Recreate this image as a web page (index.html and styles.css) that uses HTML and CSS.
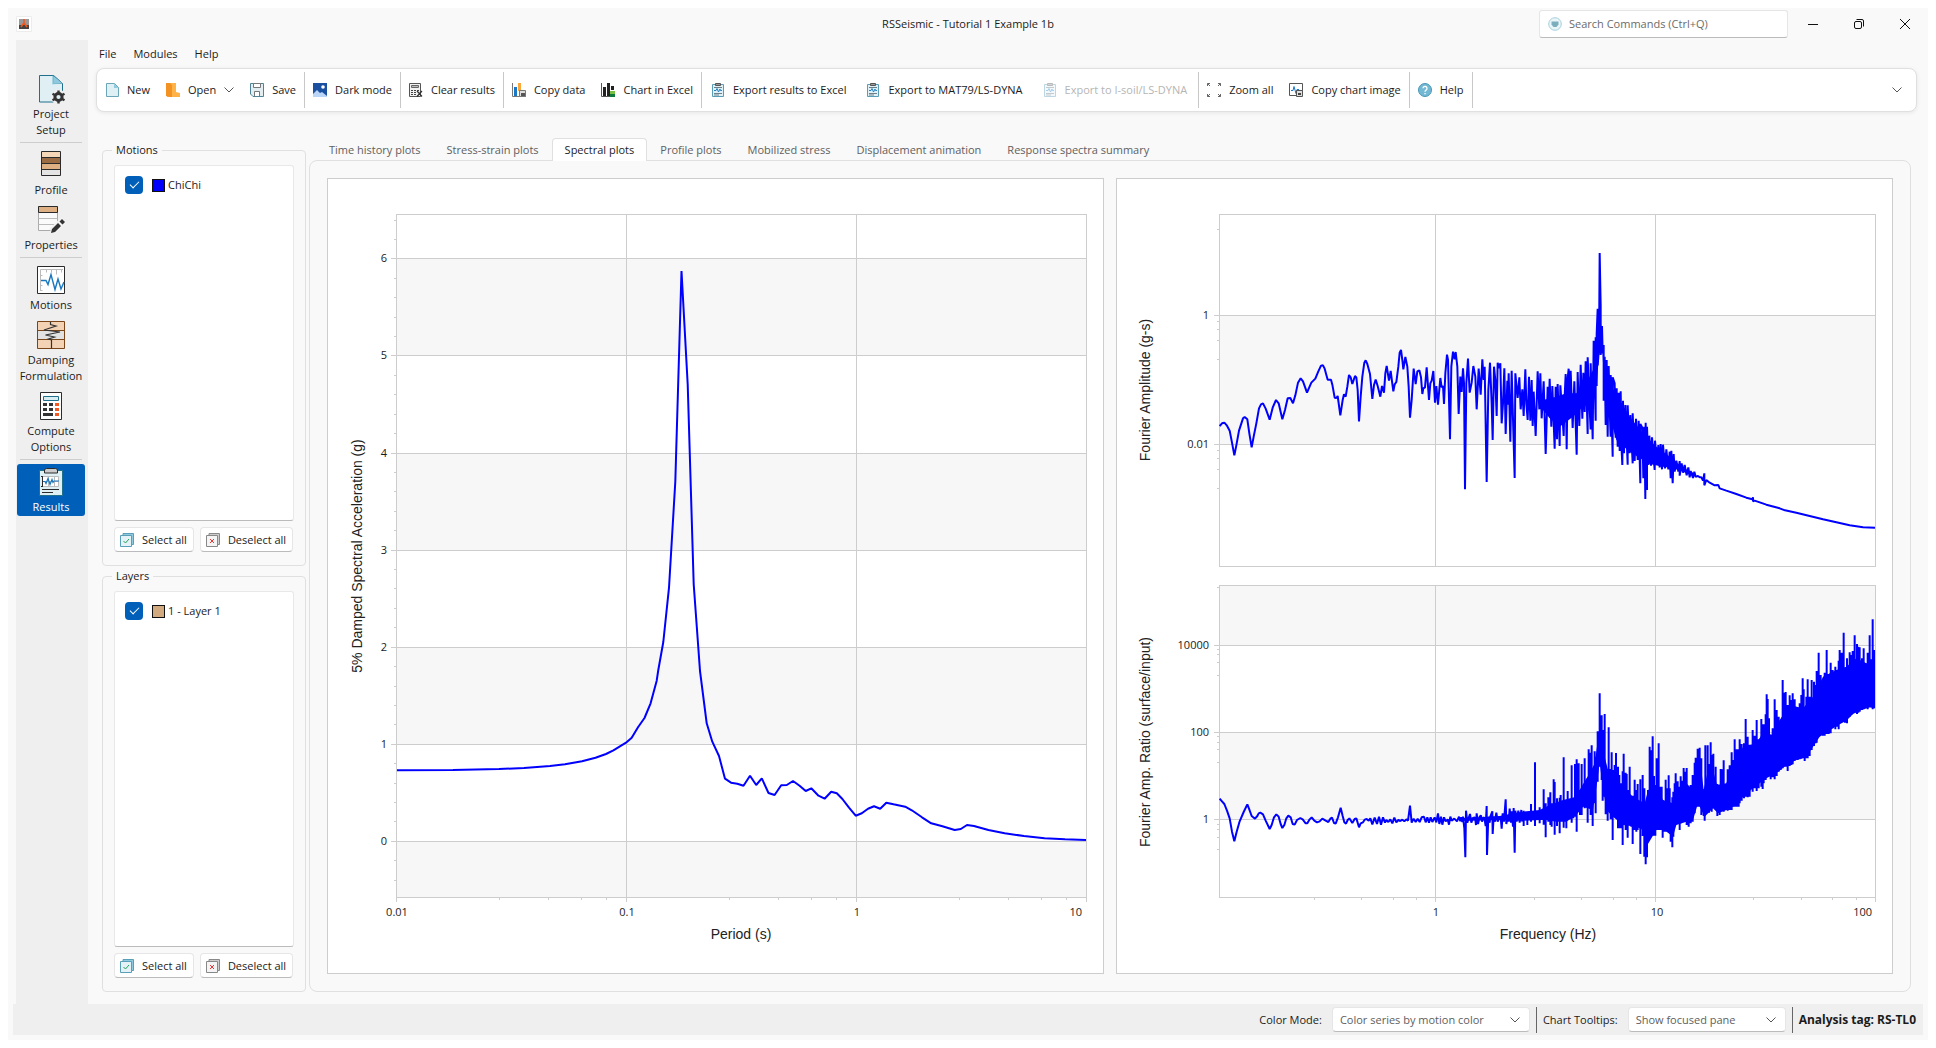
FILE: index.html
```html
<!DOCTYPE html>
<html lang="en">
<head>
<meta charset="utf-8">
<title>RSSeismic - Tutorial 1 Example 1b</title>
<link rel="stylesheet" href="styles.css">
</head>
<body>
<svg class="defs" aria-hidden="true">
  <symbol id="chevron" viewBox="0 0 10 6"><path d="M.5 .5L5 5L9.500 .5" fill="none" stroke="currentColor"/></symbol>
  <symbol id="report" viewBox="0 0 14 14">
    <path d="M1.500 1.500h11v12h-11z" fill="#dff0f6" stroke="#5a9cb5"/>
    <path d="M4.500 .5h5v2h-5z" fill="#999" stroke="#555"/>
    <path d="M3 4.500h8M3 10.500h8M3 12h5" stroke="#6d7f88"/>
    <path d="M3 7.500h2l1-2 1.500 3.500 1.500-3 .5 1.500h1.500" fill="none" stroke="#2381c4"/>
  </symbol>
  <symbol id="checkall" viewBox="0 0 14 14">
    <path d="M3 .5h10.500v11H3z" fill="#8fc9de" stroke="#5a9fb8"/>
    <path d="M.5 2.500h11v11H.5z" fill="#e4f2f7" stroke="#5a9fb8"/>
    <path d="M3.500 8l2 2 3.500-4" fill="none" stroke="#1fa55b"/>
  </symbol>
  <symbol id="uncheckall" viewBox="0 0 14 14">
    <path d="M3 .5h10.500v11H3z" fill="#ccc" stroke="#888"/>
    <path d="M.5 2.500h11v11H.5z" fill="#f4f4f4" stroke="#888"/>
    <path d="M4 6l4 4M8 6l-4 4" fill="none" stroke="#e33"/>
  </symbol>
</svg>

<div class="window">
  <header class="titlebar">
    <svg class="app-icon" viewBox="0 0 16 16"><path d="M.5 .5h15v15H.5z" fill="#fff" stroke="#ececec"/><path d="M3 3h10v10H3z" fill="#999"/><path d="M3 9h10v4H3z" fill="#444"/><path d="M8 3v6M5 11l2-3h2l2 3" fill="none" stroke="#f1581e" stroke-width="1.500"/></svg>
    <h1>RSSeismic - Tutorial 1 Example 1b</h1>
    <div class="title-tools">
      <label class="search">
        <svg viewBox="0 0 14 14"><circle cx="7" cy="7" r="6.300" fill="#e9f5f9" stroke="#a7cfdc"/><path d="M3.500 4.500h7v3l-2 2.500h-3l-2-2.500z" fill="#7cadbd"/></svg>
        <input type="text" placeholder="Search Commands (Ctrl+Q)" aria-label="Search Commands">
      </label>
      <button class="win-btn" aria-label="Minimize"><svg viewBox="0 0 10 10"><path d="M0 5.500h10" stroke="#111"/></svg></button>
      <button class="win-btn" aria-label="Restore"><svg viewBox="0 0 10 10"><rect x=".5" y="2.500" width="7" height="7" rx="1.500" fill="none" stroke="#111"/><path d="M2.500 .5H8a1.500 1.500 0 0 1 1.500 1.500v5.500" fill="none" stroke="#111"/></svg></button>
      <button class="win-btn" aria-label="Close"><svg viewBox="0 0 10 10"><path d="M0 0l10 10M10 0L0 10" stroke="#111"/></svg></button>
    </div>
  </header>

  <div class="body">
    <nav class="sidebar">
      <button class="step"><svg viewBox="0 0 28 28"><path d="M2.500 .5h14l9 8v18.500h-23z" fill="#dfeff4" stroke="#20708c"/><path d="M16.500 .5v8h9z" fill="#8fc9de" stroke="#20708c" stroke-width=".6"/><path d="M15 .5v9l11-1z" fill="#8fc9de" opacity=".7"/><circle cx="21.500" cy="22" r="7.500" fill="#efefef"/><circle cx="21.500" cy="22" r="3.600" fill="#dfeff4" stroke="#333" stroke-width="3"/><path d="M21.500 15.500v3M21.500 25.500v3M15.500 18.800l2.700 1.500M24.800 23.800l2.700 1.500M15.500 25.300l2.700-1.500M24.800 20.300l2.700-1.500" stroke="#333" stroke-width="2.400"/></svg>Project<br>Setup</button>
      <hr>
      <button class="step"><svg viewBox="0 0 28 28"><path d="M4.500 .5h19v6h-19z" fill="#f6d7b8"/><path d="M4.500 6.500h19v6h-19z" fill="#9b6b43"/><path d="M4.500 12.500h19v6h-19z" fill="#deb083"/><path d="M4.500 18.500h19v6h-19z" fill="#e4e4e4"/><path d="M4.500 .5h19v24h-19zM4.500 6.500h19M4.500 12.500h19M4.500 18.500h19" fill="none" stroke="#2b2b2b"/></svg>Profile</button>
      <button class="step"><svg viewBox="0 0 28 28"><path d="M1.500 .5h19v24h-19z" fill="#fafafa" stroke="#aaa"/><path d="M1.500 12.500h19M1.500 18.500h19" stroke="#bbb"/><path d="M1.500 .5h19v6h-19z" fill="#deb083" stroke="#2b2b2b"/><path d="M15 26l9-9 3-3" stroke="#f2f2f2" stroke-width="8"/><path d="M14 27l1-4 6-6 3 3-6 6zM22.500 15.500l2.500-2.500 3 3-2.500 2.500z" fill="#333"/></svg>Properties</button>
      <hr>
      <button class="step"><svg viewBox="0 0 28 28"><path d="M.5 .5h27v27H.5z" fill="#fff" stroke="#2b2b2b"/><path d="M3.500 25V3.500H26M3.500 9.500h2M3.500 19.500h2M3.500 24.500h2M9.500 3.500v3M14.500 3.500v3M19.500 3.500v5M24.500 3.500v3" fill="none" stroke="#bbb"/><path d="M4 14.500h5l2 4 3-10 4 15 3-10.500 3 10 3-7" fill="none" stroke="#1877be" stroke-width="1.400"/></svg>Motions</button>
      <button class="step"><svg viewBox="0 0 28 28"><path d="M.5 .5h27v27H.5z" fill="#f3d3b3"/><path d="M1 9.500h26v9H1z" fill="#e2e2e2"/><path d="M.5 .5h27v27H.5zM.5 9.500h27M.5 18.500h27" fill="none" stroke="#7a4518"/><path d="M13.500 1v2.500l5.500 1.500-12 4 16 2-14.500 3 9 2-6 2 3 1M14.500 18.500v9" fill="none" stroke="#333" stroke-width="1.200"/></svg>Damping<br>Formulation</button>
      <button class="step"><svg viewBox="0 0 28 28"><path d="M3.500 .5h21v27h-21z" fill="#fff" stroke="#2b2b2b"/><path d="M6.500 4.500h15v4h-15z" fill="#d9eef3" stroke="#20708c"/><path d="M6 11h4v3H6zM12 11h4v3h-4zM6 16h4v3H6zM12 16h4v3h-4zM6 21h10v3H6z" fill="#333"/><path d="M18 11h4v3h-4zM18 16h4v3h-4zM18 21h4v3h-4z" fill="#f15a24"/></svg>Compute<br>Options</button>
      <hr>
      <button class="step current"><svg viewBox="0 0 28 28"><path d="M2.500 2.500h23v25h-23z" fill="#dff0f5" stroke="#20708c"/><path d="M7.500 1.500l2-1h9l2 1v3.500h-13z" fill="#ccc" stroke="#2b2b2b"/><path d="M5.500 8.500h16v10h-16zM5.500 13.500h16M11.500 8.500v10M17.500 8.500v10" fill="#fff" stroke="#bbb"/><path d="M5.500 8v11M4 8.500h2M4 18.500h2M5 21.500h17M5 24.500h11" stroke="#2b2b2b"/><path d="M6 13.500h2l1 2 2-5 2 6 2-5 1 3 1-1.500h5" fill="none" stroke="#1877be" stroke-width="1.200"/></svg>Results</button>
    </nav>

    <main>
      <div class="menubar">
        <button>File</button><button>Modules</button><button>Help</button>
      </div>

      <div class="toolbar">
        <button class="tool"><svg viewBox="0 0 14 14"><path d="M1.500 .5h8l4 4v9h-12z" fill="#dff0f5" stroke="#6aa6b8"/><path d="M9 .5v4.500h4.500z" fill="#8fc9de"/></svg>New</button>
        <button class="tool"><svg viewBox="0 0 14 14"><path d="M0 0h10v9l4 1v4H1z" fill="#ffb347"/><path d="M0 0h4l2 2v12H4l-4-1z" fill="#f29222"/></svg>Open<svg class="caret"><use href="#chevron"/></svg></button>
        <button class="tool"><svg viewBox="0 0 14 14"><path d="M.5 .5h13v13H3l-2.500-2.500z" fill="#e3eef2" stroke="#4f8496"/><path d="M3.500 .5h7v4h-7zM4.500 13v-4.500h5V13" fill="#fff" stroke="#777"/></svg>Save</button>
        <hr>
        <button class="tool"><svg viewBox="0 0 14 14"><path d="M0 0h14v14H0z" fill="#1b4f9f"/><path d="M0 14v-3l4-4 3 3 2-1 5 4v1z" fill="#b9d5f8"/><circle cx="10" cy="4" r="1.800" fill="#fff"/></svg>Dark mode</button>
        <hr>
        <button class="tool"><svg viewBox="0 0 14 14"><path d="M.5 .5h11v13H.5z" fill="#f2f2f2" stroke="#555"/><path d="M2.500 2.500h7v2h-7z" fill="#bbb" stroke="#666"/><path d="M2 7.500h8M2 9.500h5M2 11.500h5" stroke="#444" stroke-dasharray="2 1"/><path d="M8 8l5 5.500M13 8l-5 5.500" stroke="#333" stroke-width="1.200"/></svg>Clear results</button>
        <hr>
        <button class="tool"><svg viewBox="0 0 14 14"><path d="M.5 0v13.500H14" fill="none" stroke="#777"/><path d="M2 4h3v9H2z" fill="#1a78c8"/><path d="M6 0h3v8H6z" fill="#f9a73b"/><path d="M7.500 7.500h6v6h-6z" fill="#ddd" stroke="#777"/><path d="M9 10h4v3H9z" fill="#555"/></svg>Copy data</button>
        <button class="tool"><svg viewBox="0 0 14 14"><path d="M.5 0v13.500H14" fill="none" stroke="#555"/><path d="M2 4h3v9H2zM6 0h3v13H6zM10 3h3v4h-3z" fill="#222"/><path d="M9 8h5v3H9z" fill="#7ac143"/><path d="M9 11h5v3H9z" fill="#0d7a3c"/></svg>Chart in Excel</button>
        <hr>
        <button class="tool export"><svg><use href="#report"/></svg>Export results to Excel</button>
        <button class="tool export"><svg><use href="#report"/></svg>Export to MAT79/LS-DYNA</button>
        <button class="tool export" disabled><svg><use href="#report"/></svg>Export to I-soil/LS-DYNA</button>
        <hr>
        <button class="tool"><svg viewBox="0 0 14 14"><path d="M.5 3V.5H3M.5 .5L3 3M11 .5h2.500V3M13.500 .5L11 3M.5 11v2.500H3M.5 13.500L3 11M11 13.500h2.500V11M13.500 13.500L11 11" fill="none" stroke="#666"/></svg>Zoom all</button>
        <button class="tool"><svg viewBox="0 0 14 14"><path d="M.5 .5h13v12H.5z" fill="#fff" stroke="#555"/><path d="M2 7.500h2l1-4 2 7 1-4h2" fill="none" stroke="#1a78c8"/><path d="M7.500 7.500h6v6h-6z" fill="#ddd" stroke="#555"/><path d="M9 10h3v2H9z" fill="#444"/></svg>Copy chart image</button>
        <hr>
        <button class="tool"><svg viewBox="0 0 14 14"><circle cx="7" cy="7" r="6.500" fill="#74b9d4" stroke="#4996b5"/><path d="M5 5.300a2 2 0 1 1 3 1.800q-1 .6-1 1.700M7 10v1.300" fill="none" stroke="#fff" stroke-width="1.300"/></svg>Help</button>
        <hr>
        <button class="more" aria-label="More commands"><svg class="caret"><use href="#chevron"/></svg></button>
      </div>

      <div class="content">
        <div class="filters">
          <fieldset>
            <legend>Motions</legend>
            <div class="list">
              <label><input type="checkbox" checked><span class="swatch motion"></span>ChiChi</label>
            </div>
            <div class="actions">
              <button><svg><use href="#checkall"/></svg>Select all</button>
              <button><svg><use href="#uncheckall"/></svg>Deselect all</button>
            </div>
          </fieldset>
          <fieldset>
            <legend>Layers</legend>
            <div class="list">
              <label><input type="checkbox" checked><span class="swatch layer"></span>1 - Layer 1</label>
            </div>
            <div class="actions">
              <button><svg><use href="#checkall"/></svg>Select all</button>
              <button><svg><use href="#uncheckall"/></svg>Deselect all</button>
            </div>
          </fieldset>
        </div>

        <section class="results">
          <div class="tabs" role="tablist">
            <button role="tab">Time history plots</button>
            <button role="tab">Stress-strain plots</button>
            <button role="tab" aria-selected="true">Spectral plots</button>
            <button role="tab">Profile plots</button>
            <button role="tab">Mobilized stress</button>
            <button role="tab">Displacement animation</button>
            <button role="tab">Response spectra summary</button>
          </div>
          <div class="charts">
            <svg class="chart" viewBox="328 179 775 794">
              <g class="band"><path d="M396 258h690v97h-690zM396 453h690v97h-690zM396 647h690v97h-690zM396 841h690v56h-690z"/></g>
              <g class="grid">
                <path d="M396.500 214.500h690v683h-690zM626.500 214v688M856.500 214v688M396.500 897v5M1086.500 897v5"/>
                <path d="M391 258.500h695M391 355.500h695M391 453.500h695M391 550.500h695M391 647.500h695M391 744.500h695M391 841.500h695"/>
                <path d="M394 220.500h2M394 239.500h2M394 278.500h2M394 297.500h2M394 317.500h2M394 336.500h2M394 375.500h2M394 394.500h2M394 414.500h2M394 433.500h2M394 472.500h2M394 491.500h2M394 511.500h2M394 530.500h2M394 569.500h2M394 588.500h2M394 608.500h2M394 627.500h2M394 666.500h2M394 686.500h2M394 705.500h2M394 724.500h2M394 763.500h2M394 783.500h2M394 802.500h2M394 821.500h2M394 860.500h2M394 880.500h2"/>
                <path d="M499.500 897v3M548.500 897v3M581.500 897v3M606.500 897v3M729.500 897v3M778.500 897v3M811.500 897v3M836.500 897v3M959.500 897v3M1008.500 897v3M1041.500 897v3M1066.500 897v3"/>
              </g>
              <g class="ticks end"><text x="387" y="262">6</text><text x="387" y="359">5</text><text x="387" y="457">4</text><text x="387" y="554">3</text><text x="387" y="651">2</text><text x="387" y="748">1</text><text x="387" y="845">0</text><text x="1082" y="916">10</text></g>
              <g class="ticks mid"><text x="397" y="916">0.01</text><text x="627" y="916">0.1</text><text x="857" y="916">1</text></g>
              <text class="axis" x="741" y="939">Period (s)</text>
              <text class="axis" transform="translate(362 556) rotate(-90)">5% Damped Spectral Acceleration (g)</text>
              <polyline class="line" points="397,770.300 453,770 499,769 524,768 550,766 565,764.300 582,761.300 595.500,757.700 606,754 613.400,750.300 626,742.700 631.700,737.700 638,727.300 644.500,718 650.600,703.300 656.700,680.700 658.300,670 663.300,642 669,587.700 675.300,481.700 681.500,271 687.700,384.300 693.700,584.300 700,671 706.700,723.300 712.300,741.700 719,756 725,778.700 731,782.700 737.300,783.700 743.500,785.700 750,775.700 756.200,785 761.800,778.300 768.500,793 774.600,795 781.200,785.300 786.800,785 793,781 799.600,785.700 805.700,791 811.300,788.300 818.500,795.700 824.600,798.700 831.200,791.700 836.800,793.300 842.400,799 849,807.700 855.700,815.700 861.800,813.300 868,808.700 874,806.300 880.200,808.700 886.300,802.700 893.500,804.300 905.200,806.700 911.800,810.300 922,817.300 931.200,823.300 942.400,826.300 954.700,830 960.800,829 967,825 974,826 988.400,830 1004.700,833.300 1024,836 1044.500,838.300 1065,839.300 1086,840"/>
            </svg>

            <svg class="chart" viewBox="1117 179 775 794">
              <g class="band"><path d="M1219 315h656v129h-656zM1219 585h656v60h-656zM1219 732h656v87h-656z"/></g>
              <g class="grid">
                <path d="M1219.500 214.500h656v352h-656zM1219.500 585.500h656v312h-656zM1435.500 214v352M1655.500 214v352M1435.500 585v317M1655.500 585v317M1875.500 897v5"/>
                <path d="M1214 315.500h661M1214 444.500h661M1214 645.500h661M1214 732.500h661M1214 819.500h661"/>
                <path d="M1217 229.500h2M1217 321.500h2M1217 329.500h2M1217 340.500h2M1217 359.500h2M1217 450.500h2M1217 458.500h2M1217 469.500h2M1217 488.500h2M1217 587.500h2M1217 649.500h2M1217 654.500h2M1217 662.500h2M1217 675.500h2M1217 736.500h2M1217 742.500h2M1217 749.500h2M1217 762.500h2M1217 824.500h2M1217 829.500h2M1217 837.500h2M1217 849.500h2"/>
                <path d="M1314.500 897v3M1361.500 897v3M1393.500 897v3M1416.500 897v3M1534.500 897v3M1581.500 897v3M1613.500 897v3M1636.500 897v3M1753.500 897v3M1801.500 897v3M1832.500 897v3M1856.500 897v3"/>
              </g>
              <g class="ticks end"><text x="1209" y="319">1</text><text x="1209" y="448">0.01</text><text x="1209" y="649">10000</text><text x="1209" y="736">100</text><text x="1209" y="823">1</text><text x="1872" y="916">100</text></g>
              <g class="ticks mid"><text x="1436" y="916">1</text><text x="1657" y="916">10</text></g>
              <text class="axis" x="1548" y="939">Frequency (Hz)</text>
              <text class="axis" transform="translate(1150 390) rotate(-90)">Fourier Amplitude (g-s)</text>
              <text class="axis" transform="translate(1150 742) rotate(-90)">Fourier Amp. Ratio (surface/input)</text>

              <svg x="1219" y="214" width="656" height="352" viewBox="328 132 1968 1056">
                <polygon class="mass" points="1300,690 1340,680 1370,670 1400,670 1430,640 1450,600 1462,520 1470,420 1478,500 1486,600 1500,640 1530,690 1560,740 1600,790 1640,830 1680,860 1720,893 1760,913 1750,918 1720,905 1690,895 1660,890 1620,882 1600,870 1560,845 1520,810 1500,740 1486,690 1478,540 1470,520 1462,640 1445,700 1420,710 1390,740 1350,770 1320,745 1300,720"/>
                <polyline class="line dense" points="330,768 337,760 344,758 352,767 360,782 367,818 374,856 380,826 388,782 400,745 405,741 413,748 419,790 426,832 432,800 440,760 448,715 454,703 460,700 468,716 480,749 489,713 499,690 507,700 518,748 526,720 534,685 542,684 550,700 557,676 565,638 573,625 580,634 592,668 605,638 617,626 626,604 634,587 640,586 645,596 654,629 664,629 668,644 675,683 680,684 684,678 692,736 699,690 703,673 708,680 713,650 718,615 723,622 728,642 736,618 740,622 744,660 748,754 753,680 758,620 764,578 768,571 773,582 781,612 788,687 793,645 798,629 804,648 812,680 817,648 823,668 827,610 831,588 838,632 843,603 851,664 855,643 860,636 866,590 870,548 874,540 878,570 881,598 887,561 893,590 897,650 901,743 906,690 912,596 918,642 923,604 929,601 934,622 938,672 941,655 946,652 951,592 958,690 962,640 966,632 971,603 976,698 980,648 985,704 992,624 996,652 1000,648 1003,702 1007,610 1012,554 1015,570 1021,808 1025,590 1030,545 1035,568 1038,546 1043,590 1047,732 1052,620 1056,666 1060,595 1063,640 1066,958 1070,640 1075,566 1080,668 1086,638 1091,588 1097,620 1101,718 1107,596 1113,674 1118,568 1122,630 1125,590 1131,936 1136,660 1141,578 1146,700 1149,810 1153,590 1157,630 1161,738 1164,578 1168,595 1172,580 1176,760 1180,700 1184,595 1188,792 1193,632 1195,704 1197,610 1202,815 1206,602 1211,782 1215,924 1217,610 1224,684 1229,622 1233,718 1238,658 1242,738 1247,598 1250,700 1254,750 1258,620 1262,752 1266,630 1269,768 1272,665 1278,798 1284,604 1289,718 1292,610 1296,745 1302,634 1308,852 1314,650 1317,735 1320,626 1325,770 1328,648 1335,836 1338,650 1342,808 1344,642 1350,828 1352,646 1358,735 1362,798 1365,680 1368,612 1371,838 1374,625 1377,596 1380,738 1383,602 1389,774 1394,634 1401,854 1404,606 1409,768 1413,584 1418,746 1421,608 1425,726 1428,574 1434,792 1434,562 1440,718 1443,778 1443,580 1449,808 1452,512 1458,752 1458,502 1461,648 1461,492 1464,416 1464,586 1468,534 1470,249 1473,405 1473,555 1477,468 1479,550 1482,525 1482,692 1485,560 1488,765 1491,570 1494,800 1497,588 1500,718 1503,800 1503,615 1509,860 1509,622 1515,640 1518,803 1521,655 1524,830 1527,668 1530,843 1533,664 1536,843 1538,885 1540,692 1543,850 1547,705 1554,884 1554,706 1560,850 1562,735 1569,880 1569,730 1575,873 1579,746 1584,870 1587,752 1592,940 1592,762 1598,773 1601,925 1604,770 1607,987 1608,758 1612,960 1612,770 1616,885 1619,797 1624,887 1627,802 1635,900 1636,812 1642,880 1646,825 1650,892 1653,822 1657,898 1660,824 1666,895 1670,838 1676,898 1680,845 1683,925 1685,842 1689,940 1692,852 1695,905 1700,872 1706,905 1710,873 1710,917 1716,880 1720,908 1725,885 1731,916 1736,892 1740,922 1743,903 1750,924 1754,905 1758,920 1765,918 1770,922 1775,922 1780,932 1784,910 1784,946 1790,930 1800,938 1815,946 1826,945 1830,955 1850,962 1880,972 1910,983 1928,988 1930,982 1930,994 1935,992 1970,1004 2010,1015 2026,1021 2060,1028 2100,1038 2140,1048 2180,1057 2220,1066 2260,1072 2296,1073"/>
              </svg>

              <svg x="1219" y="585" width="656" height="312" viewBox="328 45 1968 936">
                <polyline class="line dense" points="330,686 337,694 344,702 352,722 360,745 367,785 374,814 381,785 390,754 402,726 413,703 418,716 426,738 436,746 443,738 447,730 452,728 460,733 468,752 480,777 486,765 493,742 500,733 507,740 513,762 518,774 524,765 530,745 536,737 543,742 549,762 555,764 562,750 572,744 579,748 588,760 593,760 600,748 606,742 614,752 622,757 630,754 638,746 648,752 656,756 662,746 667,743 673,759 678,761 685,742 693,713 699,738 704,757 709,761 714,750 719,745 728,759 735,747 740,745 744,758 748,772 753,760 760,757 765,749 771,747 777,752 782,745 788,763 795,743 802,762 808,740 814,764 820,742 826,758 830,750 836,756 842,748 848,760 854,743 860,757 866,750 872,753 878,749 884,754 890,748 895,752 901,707 906,758 912,746 918,756 924,746 930,756 936,742 943,740 948,757 953,742 958,758 963,742 968,756 975,742 980,757 985,730 989,762 994,740 998,764 1003,742 1008,754 1014,748 1018,764 1022,740 1026,752 1034,746 1042,754 1048,740 1052,754 1055,742 1058,756 1060,740 1064,775 1067,862 1069,722 1073,758 1077,744 1081,732 1085,758 1090,744 1096,742 1099,765 1101,730 1105,762 1110,740 1114,736 1117,755 1120,745 1124,742 1128,768 1131,708 1132,855 1136,740 1140,758 1142,740 1148,724 1149,792 1152,740 1156,755 1160,728 1164,755 1170,740 1174,752 1176,776 1179,730 1183,755 1188,688 1190,762 1194,740 1197,755 1200,716 1204,758 1206,724 1210,770 1212,714 1215,848 1217,722 1221,755 1226,722 1230,758 1235,720 1238,755"/>
                <polygon class="mass" points="1050,744 1120,742 1170,738 1232,726 1290,720 1320,705 1360,690 1400,680 1415,650 1440,610 1455,580 1466,500 1474,500 1485,560 1500,620 1520,640 1540,650 1570,680 1605,700 1615,660 1640,650 1660,690 1690,700 1700,660 1730,640 1745,655 1760,580 1775,600 1782,660 1795,600 1810,600 1822,645 1850,640 1866,590 1880,570 1900,530 1940,520 1965,480 1985,495 2010,450 2040,405 2080,415 2110,380 2140,320 2180,300 2210,290 2240,265 2270,280 2296,270 2296,415 2280,412 2255,420 2230,432 2210,452 2180,468 2150,488 2130,500 2110,530 2090,560 2060,570 2030,585 2000,610 1970,625 1950,640 1930,655 1900,680 1880,705 1850,720 1825,730 1810,715 1785,740 1765,700 1750,750 1730,755 1700,765 1690,800 1665,780 1640,780 1610,830 1600,780 1580,770 1540,765 1510,740 1490,720 1478,640 1470,580 1462,640 1450,720 1420,710 1400,735 1370,755 1340,755 1310,750 1290,750 1240,752 1170,750 1050,753"/>
                <path class="spikes" d="M1242 722V768M1253 728V765M1264 702V755M1276 577V768M1290 712V760M1302 658V764M1308 700V802M1316 682V755M1322 667V765M1326 700V770M1332 628V740M1335 636V794M1342 685V768M1350 683V790M1353 675V740M1362 562V773M1370 690V775M1374 663V740M1380 690V748M1386 586V758M1391 690V745M1396 582V740M1401 568V785M1407 580V720M1411 660V735M1416 582V735M1425 565V715M1434 625V758M1437 538V700M1443 548V735M1446 526V700M1449 620V768M1455 544V700M1458 560V730M1464 484V635M1470 370V590M1476 436V630M1479 480V692M1481 508V680M1485 432V680M1488 596V733M1494 597V752M1497 472V700M1503 597V748M1506 547V700M1509 600V810M1515 585V740M1519 549V740M1525 590V775M1529 615V775M1534 640V775M1539 604V825M1542 551V740M1548 608V780M1551 612V760M1554 660V803M1560 590V765M1565 678V770M1569 677V822M1575 629V780M1580 660V785M1584 642V780M1592 628V852M1599 615V798M1604 655V860M1608 720V883M1612 720V862M1615 660V790M1620 530V795M1624 541V795M1629 499V795M1633 618V797M1637 645V797M1641 565V775M1647 520V765M1652 650V780M1656 650V780M1659 690V803M1662 705V785M1668 629V785M1673 655V785M1677 616V788M1680 655V790M1683 710V815M1688 682V832M1691 665V800M1695 640V765M1698 610V765M1704 634V755M1710 650V780M1713 619V760M1719 632V750M1722 594V750M1725 605V755M1731 594V765M1737 655V770M1743 645V760M1749 615V755M1755 578V730M1758 563V700M1764 536V710M1770 533V710M1775 565V735M1782 658V738M1785 658V752M1787 526V720M1794 526V715M1798 582V728M1803 517V720M1806 555V725M1811 551V710M1818 590V715M1823 642V738M1830 655V735M1833 597V720M1837 598V715M1842 571V725M1848 642V720M1854 598V722M1860 586V720M1866 547V720M1872 570V710M1875 508V710M1881 538V710M1887 538V710M1890 508V700M1896 522V692M1903 520V685M1908 447V680M1914 500V682M1920 524V680M1929 480V665M1935 497V655M1941 450V663M1947 508V655M1955 447V650M1959 463V657M1962 463V640M1968 433V630M1971 373V620M1974 387V620M1978 445V618M1983 497V628M1989 475V622M1995 388V628M2001 420V618M2007 440V605M2013 452V600M2019 330V595M2025 368V590M2028 366V590M2034 405V603M2040 376V588M2045 390V585M2049 370V583M2055 388V572M2064 415V570M2070 400V568M2075 375V566M2079 325V565M2082 358V565M2085 415V573M2090 380V565M2094 328V565M2100 380V558M2106 330V540M2113 335V528M2118 345V520M2121 303V518M2127 248V500M2133 315V492M2140 332V497M2145 308V497M2151 240V492M2157 312V492M2163 278V490M2169 300V475M2177 290V478M2183 300V470M2187 272V478M2190 240V460M2196 248V453M2202 188V455M2206 293V458M2212 265V460M2220 247V440M2225 255V435M2229 243V430M2235 196V428M2242 222V432M2246 230V428M2250 232V425M2257 265V420M2262 235V418M2267 285V415M2274 248V418M2280 196V412M2284 268V412M2289 148V418M2294 240V415"/>
              </svg>
            </svg>
          </div>
        </section>
      </div>
    </main>
  </div>

  <footer class="statusbar">
    <label for="color-mode">Color Mode:</label>
    <div class="select wide"><select id="color-mode"><option>Color series by motion color</option></select><svg class="caret"><use href="#chevron"/></svg></div>
    <hr>
    <label for="tooltips">Chart Tooltips:</label>
    <div class="select"><select id="tooltips"><option>Show focused pane</option></select><svg class="caret"><use href="#chevron"/></svg></div>
    <hr>
    <strong>Analysis tag: RS-TL0</strong>
  </footer>
</div>
</body>
</html>
```
FILE: styles.css
```css
* { box-sizing: border-box; }

body {
  margin: 0;
  padding: 8px;
  background: #fff;
  color: #1b1b1b;
  font: 11px/16px "Open Sans", "Noto Sans", sans-serif;
}

button, input, select { font: inherit; color: inherit; }
button { border: 0; padding: 0; background: none; white-space: nowrap; }
hr { margin: 0; border: 0; flex: none; }
.defs { position: absolute; width: 0; height: 0; }

.window {
  display: flex;
  flex-direction: column;
  min-height: calc(100vh - 16px);
  background: #f9f9f9;
}

/* Title bar */
.titlebar {
  display: grid;
  grid-template-columns: 1fr auto 1fr;
  align-items: center;
  height: 32px;
}
.app-icon { width: 16px; height: 16px; margin-left: 8px; }
.titlebar h1 { margin: 0; font-size: 11px; font-weight: 400; }
.title-tools { display: flex; justify-content: flex-end; align-items: center; }
.search {
  display: flex;
  align-items: center;
  gap: 7px;
  width: 249px;
  height: 28px;
  margin-right: 2px;
  padding: 0 8px;
  background: #fff;
  border: 1px solid #e6e6e6;
  border-bottom-color: #bbb;
  border-radius: 3px;
}
.search svg { width: 14px; height: 14px; flex: none; }
.search input { flex: 1; min-width: 0; border: 0; padding: 0; outline: 0; background: none; }
.search input::placeholder { color: #6b6b6b; opacity: 1; }
.win-btn { width: 46px; height: 32px; display: grid; place-items: center; }
.win-btn svg { width: 10px; height: 10px; }

/* Workflow sidebar */
.body { flex: 1; display: flex; }
.sidebar {
  display: flex;
  flex-direction: column;
  align-items: stretch;
  gap: 3px;
  width: 72px;
  margin-left: 8px;
  padding: 31px 3px 0 1px;
  background: #efefef;
}
.step {
  display: block;
  padding: 4px 0 1px;
  border-radius: 3px;
  text-align: center;
}
.step svg { display: block; width: 28px; height: 28px; margin: 0 auto 3px; overflow: visible; }
.step.current { background: #005fb8; color: #fff; }
.sidebar hr { height: 1px; margin: 0 3px 1px; background: #cdcdcd; }

main { flex: 1; min-width: 0; display: flex; flex-direction: column; }

/* Menu and toolbar */
.menubar { display: flex; gap: 17px; height: 28px; padding-left: 11px; }
.toolbar {
  display: flex;
  align-items: center;
  height: 44px;
  margin: 0 11px 0 8px;
  background: #fff;
  border: 1px solid #e0e0e0;
  border-radius: 8px;
  box-shadow: 0 1px 4px rgba(0, 0, 0, .08);
}
.tool { display: flex; align-items: center; gap: 8px; height: 34px; padding: 0 8px; }
.tool.export { padding: 0 11px 0 9px; }
.tool svg { width: 14px; height: 14px; flex: none; }
.tool:disabled { color: #b5b5b5; }
.tool:disabled svg { opacity: .4; }
.toolbar hr { width: 1px; height: 36px; background: #c8c8c8; }
.tool svg.caret, svg.caret { width: 10px; height: 6px; flex: none; color: #555; }
.more { margin-left: auto; padding: 0 14px; height: 34px; }
.more svg { display: block; }

/* Filters */
.content { flex: 1; display: flex; gap: 3px; padding: 26px 17px 12px 14px; }
.filters { display: flex; flex-direction: column; gap: 2px; width: 204px; padding-top: 4px; }
fieldset {
  flex: 1;
  display: flex;
  flex-direction: column;
  min-width: 0;
  margin: 0;
  padding: 7px 11px 13px;
  border: 1px solid #e0e0e0;
  border-radius: 4px;
}
legend { padding: 0 4px; margin-left: -2px; }
.list {
  flex: 1;
  padding: 10px;
  background: #fff;
  border: 1px solid #e8e8e8;
  border-bottom-color: #bbb;
  border-radius: 3px;
}
.list label { display: flex; align-items: center; height: 18px; }
.list input {
  appearance: none;
  width: 18px;
  height: 18px;
  margin: 0 9px 0 0;
  border-radius: 4px;
  background: #005fb8;
  display: grid;
  place-items: center;
}
.list input::after {
  content: "";
  width: 8px;
  height: 4px;
  margin-bottom: 3px;
  border: solid #fff;
  border-width: 0 0 1px 1px;
  rotate: -45deg;
}
.swatch { width: 13px; height: 13px; margin-right: 3px; border: 1px solid #111; }
.motion { background: #00f; }
.layer { background: #d2aa80; }
.actions { display: flex; gap: 6px; margin-top: 6px; }
.actions button {
  display: flex;
  align-items: center;
  gap: 8px;
  height: 25px;
  padding: 0 6px 0 5px;
  background: #fff;
  border: 1px solid #e6e6e6;
  border-bottom-color: #bbb;
  border-radius: 4px;
}
.actions svg { width: 14px; height: 14px; }

/* Tabs and charts */
.results { flex: 1; min-width: 0; display: flex; flex-direction: column; }
.tabs { display: flex; padding-left: 7px; }
.tabs button {
  height: 23px;
  margin-bottom: -1px;
  padding: 0 12px;
  border: 1px solid transparent;
  border-bottom: 0;
  border-radius: 4px 4px 0 0;
  color: #606060;
}
.tabs [aria-selected="true"] { position: relative; background: #fff; border-color: #e0e0e0; color: #1b1b1b; }
.charts {
  flex: 1;
  display: grid;
  grid-template-columns: 1fr 1fr;
  gap: 12px;
  padding: 17px;
  border: 1px solid #e0e0e0;
  border-radius: 8px;
}
.chart { display: block; width: 100%; height: 100%; background: #fff; border: 1px solid #cdcdcd; }
.band { fill: #f7f7f7; }
.grid { fill: none; stroke: #cdcdcd; shape-rendering: crispEdges; }
.ticks { fill: #1b1b1b; }
.end { text-anchor: end; }
.mid { text-anchor: middle; }
.axis { font: 14px "Liberation Sans", Arial, sans-serif; fill: #222; text-anchor: middle; }
.line { fill: none; stroke: #00f; stroke-width: 2; stroke-linejoin: bevel; }
.dense { stroke-width: 6; }
.mass { fill: #00f; }
.spikes { stroke: #00f; stroke-width: 6; }

/* Status bar */
.statusbar {
  display: flex;
  justify-content: flex-end;
  align-items: center;
  gap: 6px;
  height: 31px;
  margin: 0 5px 5px;
  padding-right: 7px;
  background: #efefef;
}
.statusbar strong { font-size: 12px; }
.statusbar hr { width: 1px; height: 26px; background: #666; }
.select { display: grid; align-items: center; width: 158px; margin-left: 4px; }
.select.wide { width: 198px; }
.select select, .select svg { grid-area: 1 / 1; }
.select select {
  appearance: none;
  width: 100%;
  height: 25px;
  padding: 0 7px;
  color: #606060;
  background: #fff;
  border: 1px solid #e6e6e6;
  border-bottom-color: #bbb;
  border-radius: 4px;
}
.select svg { justify-self: end; margin-right: 10px; pointer-events: none; }
```
